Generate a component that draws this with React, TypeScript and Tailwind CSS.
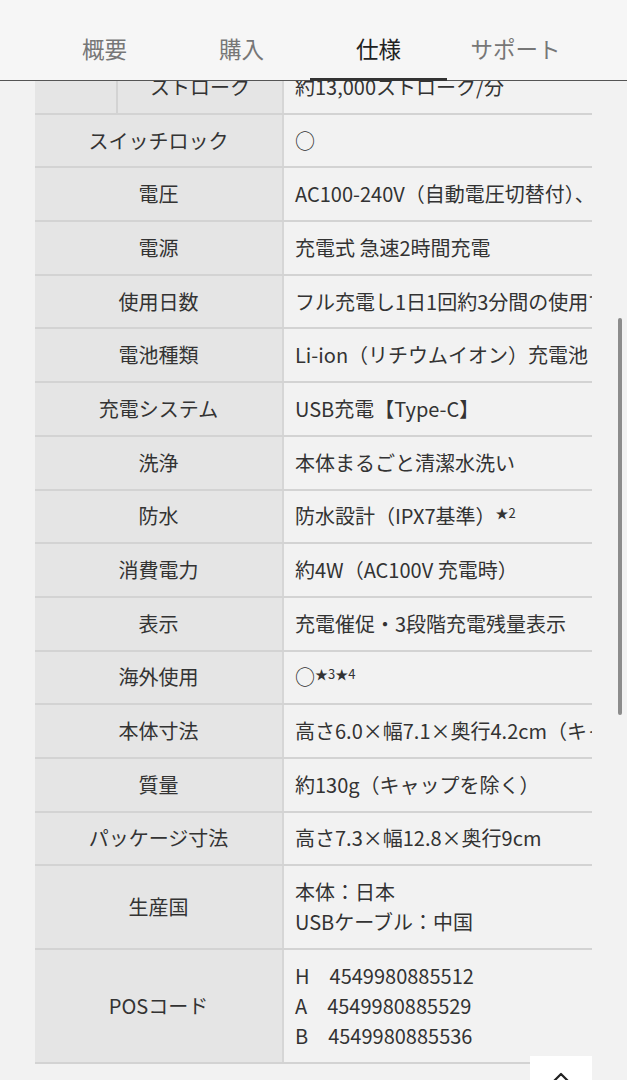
import React from "react";

type Row = { label: string; value: React.ReactNode };

const rows: Row[] = [
  { label: "スイッチロック", value: "○" },
  { label: "電圧", value: "AC100-240V（自動電圧切替付）、USB充電" },
  { label: "電源", value: "充電式 急速2時間充電" },
  { label: "使用日数", value: "フル充電し1日1回約3分間の使用で約20日間" },
  { label: "電池種類", value: "Li-ion（リチウムイオン）充電池" },
  { label: "充電システム", value: "USB充電【Type-C】" },
  { label: "洗浄", value: "本体まるごと清潔水洗い" },
  {
    label: "防水",
    value: (
      <>
        防水設計（IPX7基準）<sup className="text-[13px]">★2</sup>
      </>
    ),
  },
  { label: "消費電力", value: "約4W（AC100V 充電時）" },
  { label: "表示", value: "充電催促・3段階充電残量表示" },
  {
    label: "海外使用",
    value: (
      <>
        ○<sup className="text-[13px]">★3★4</sup>
      </>
    ),
  },
  { label: "本体寸法", value: "高さ6.0×幅7.1×奥行4.2cm（キャップ含む）" },
  { label: "質量", value: "約130g（キャップを除く）" },
  { label: "パッケージ寸法", value: "高さ7.3×幅12.8×奥行9cm" },
  {
    label: "生産国",
    value: (
      <>
        <div>本体：日本</div>
        <div>USBケーブル：中国</div>
      </>
    ),
  },
  {
    label: "POSコード",
    value: (
      <>
        <div>H　4549980885512</div>
        <div>A　4549980885529</div>
        <div>B　4549980885536</div>
      </>
    ),
  },
];

const tabs = ["概要", "購入", "仕様", "サポート"];

export default function App() {
  return (
    <div
      className="relative h-[1080px] w-full overflow-hidden bg-[#f2f2f2] text-[#333]"
      style={{ fontFamily: '"Noto Sans CJK JP", "Noto Sans", sans-serif' }}
    >
      {/* table */}
      <div className="ml-[35px] mt-[61px] w-[557px] overflow-hidden text-[20px] leading-[30px]">
        {/* partial first row */}
        <div className="flex border-b-2 border-[#d3d3d3]">
          <div className="flex w-[249px] shrink-0 bg-[#e5e5e5] border-r-2 border-[#d6d6d6]">
            <div className="w-[83px] shrink-0 border-r-2 border-[#d3d3d3]" />
            <div className="flex-1 py-[10.85px] text-center">ストローク</div>
          </div>
          <div className="flex-1 whitespace-nowrap py-[10.85px] pl-[11px]">約13,000ストローク/分</div>
        </div>
        {rows.map((r) => (
          <div key={r.label} className="flex border-b-2 border-[#d3d3d3]">
            <div className="flex w-[249px] shrink-0 items-center justify-center bg-[#e5e5e5] border-r-2 border-[#d6d6d6] py-[10.85px]">
              {r.label}
            </div>
            <div className="flex-1 whitespace-nowrap py-[10.85px] pl-[11px]">{r.value}</div>
          </div>
        ))}
      </div>

      {/* header overlay */}
      <div className="absolute left-0 top-0 h-[81px] w-full border-b border-[#555] bg-[#f6f6f6]">
        <div className="flex px-[36px]">
          {tabs.map((t, i) => (
            <div
              key={t}
              className={
                "relative h-[80px] w-[137px] pt-[33px] text-center text-[22.5px] leading-[30px] " +
                (i === 2 ? "text-[#222]" : "text-[#777]")
              }
            >
              {t}
              {i === 2 && <div className="absolute bottom-[-1px] left-0 h-[3px] w-full bg-[#333]" />}
            </div>
          ))}
        </div>
      </div>

      {/* scrollbar overlay */}
      <div className="absolute right-[5px] top-[318px] h-[397px] w-[4px] rounded-full bg-[#8c8c8c]" />

      {/* back to top button */}
      <div className="absolute left-[530px] top-[1056px] flex h-[60px] w-[62px] justify-center bg-white pt-[16px]">
        <svg width="26" height="26" viewBox="0 0 26 26" fill="none" stroke="#222" strokeWidth="2.2" strokeLinejoin="round">
          <path d="M13 2 L3 12 H9 V23 H17 V12 H23 Z" />
        </svg>
      </div>
    </div>
  );
}
